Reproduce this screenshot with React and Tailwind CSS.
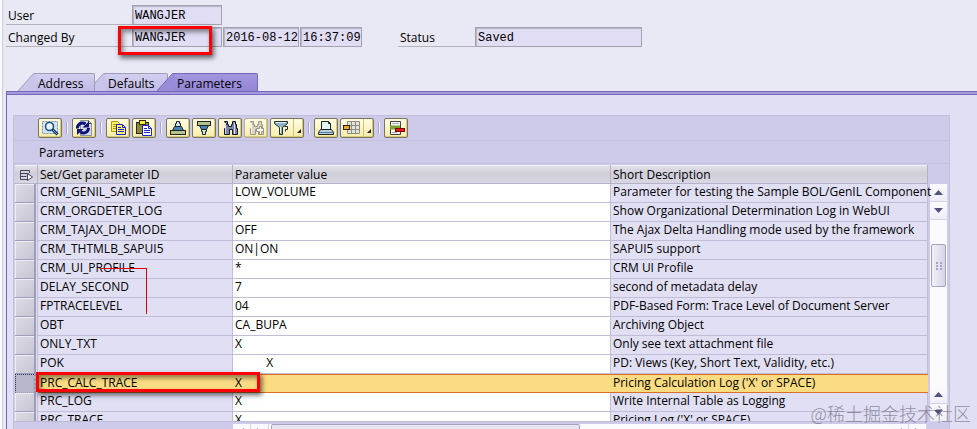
import React from 'react';
import clsx from 'clsx';

const ROWS = [
    { id: 'CRM_GENIL_SAMPLE', value: 'LOW_VOLUME', text: 'Parameter for testing the Sample BOL/GenIL Component' },
    { id: 'CRM_ORGDETER_LOG', value: 'X', text: 'Show Organizational Determination Log in WebUI' },
    { id: 'CRM_TAJAX_DH_MODE', value: 'OFF', text: 'The Ajax Delta Handling mode used by the framework' },
    { id: 'CRM_THTMLB_SAPUI5', value: 'ON|ON', text: 'SAPUI5 support' },
    { id: 'CRM_UI_PROFILE', value: '*', text: 'CRM UI Profile', marked: true },
    { id: 'DELAY_SECOND', value: '7', text: 'second of metadata delay' },
    { id: 'FPTRACELEVEL', value: '04', text: 'PDF-Based Form: Trace Level of Document Server' },
    { id: 'OBT', value: 'CA_BUPA', text: 'Archiving Object' },
    { id: 'ONLY_TXT', value: 'X', text: 'Only see text attachment file' },
    { id: 'POK', value: '          X', text: 'PD: Views (Key, Short Text, Validity, etc.)' },
    { id: 'PRC_CALC_TRACE', value: 'X', text: "Pricing Calculation Log ('X' or SPACE)", selected: true },
    { id: 'PRC_LOG', value: 'X', text: 'Write Internal Table as Logging' },
    { id: 'PRC_TRACE', value: 'X', text: "Pricing Log ('X' or SPACE)" }
];

const TABS = [
    { name: 'Address', className: 'z-10 w-[77px]' },
    { name: 'Defaults', className: '-ml-[7px] w-[80px]' },
    { name: 'Parameters', className: 'z-20 -ml-[11px] w-[101px]', active: true }
];

const Icon = ({ children, className }) => (
    <svg width="18" height="16" viewBox="0 0 18 16" fill="none" className={className}>{children}</svg>
);

const DetailIcon = () => (
    <Icon>
        <rect x="1.5" y="1.5" width="15" height="12" fill="#cfe6f2" stroke="#7d93a6" strokeDasharray="2 1" />
        <path d="M3 4h4M3 6h3M3 8h3" stroke="#fff" />
        <circle cx="8.5" cy="6.5" r="4" fill="#e8f7ff" stroke="#1f4f86" strokeWidth="1.6" />
        <path d="M6.500 5.500q1-2 3-1.500" stroke="#fff" />
        <path d="M11.500 9.500l5 5" stroke="#173a6b" strokeWidth="3" />
        <path d="M12 10l4 4" stroke="#5ea0d8" />
    </Icon>
);

const RefreshIcon = () => (
    <Icon>
        <path d="M5.500 .5h8l3 3v12h-11z" fill="#d3dde6" stroke="#8a929a" />
        <path d="M13.500 .5v3h3" stroke="#444" />
        <path d="M2.500 8.500a5 5 0 0 1 8-4.500" stroke="#11117a" strokeWidth="3" />
        <path d="M7.500 7.500H14V1.500z" fill="#11117a" />
        <path d="M13.500 8a5 5 0 0 1-8 4" stroke="#11117a" strokeWidth="3" />
        <path d="M8.500 9H2v6z" fill="#11117a" />
    </Icon>
);

const CopyIcon = () => (
    <Icon>
        <path d="M2.500 1.500h6l2 2v8h-8z" fill="#fff36a" stroke="#b09a00" />
        <path d="M4 4.500h4M4 6.500h3M4 8.500h3" stroke="#b09a00" />
        <path d="M7.500 4.500h6l3 3v7h-9z" fill="#fff36a" stroke="#1c22d0" />
        <path d="M13.500 4.500v3h3M9 7.500h3M9 9.500h6M9 11.500h6" stroke="#1c22d0" />
    </Icon>
);

const PasteIcon = () => (
    <Icon>
        <rect x="1.500" y="2.500" width="12" height="11" fill="#8c8a35" stroke="#2c2c14" />
        <rect x="4.500" y=".5" width="6" height="4" fill="#ffe92c" stroke="#2c2c14" />
        <path d="M7.500 5.500h6l3 3v7h-9z" fill="#fff" stroke="#1c22d0" />
        <path d="M13.500 5.500v3h3M9 8.500h3M9 10.500h6M9 12.500h6" stroke="#1c22d0" />
    </Icon>
);

const SortUpIcon = () => (
    <Icon>
        <rect x="1.500" y="10.500" width="15" height="4" fill="#b5c48b" stroke="#222" />
        <path d="M5.500 6.500h7l2 4h-11z" fill="#3f86b4" stroke="#222" />
        <path d="M7.500 1.500h3v2h1v3h-5v-3h1z" fill="#c9e8ef" stroke="#222" />
    </Icon>
);

const SortDownIcon = () => (
    <Icon>
        <rect x="2.500" y="1.500" width="13" height="4" fill="#b5c48b" stroke="#222" />
        <path d="M4.500 5.500h9l-2 4h-5z" fill="#3f86b4" stroke="#222" />
        <path d="M6.500 9.500h5v2h-1v3h-3v-3h-1z" fill="#c9e8ef" stroke="#222" />
    </Icon>
);

const BINOCULARS = 'M3.500 1.500h3v3h1v2h3v-2h1v-3h3v3h1v4h1v6h-5v-5h-3v5h-5v-6h1v-4h1z';

const FindIcon = () => (
    <Icon>
        <path d={BINOCULARS} fill="#7d84ad" stroke="#15151f" />
        <path d="M4.500 3v11M13.500 3v11" stroke="#d5daf0" />
    </Icon>
);

const FindNextIcon = () => (
    <Icon>
        <path d={BINOCULARS} fill="#dad6c0" stroke="#99958a" />
        <path d="M4.500 3v11" stroke="#f4f1e2" />
        <path d="M12.500 6.500h2v2h2v3h-2v3h-2v-3h-3v-3h3z" fill="#fffdf0" stroke="#99958a" />
    </Icon>
);

const FilterIcon = () => (
    <Icon>
        <path d="M1.500 1.500h13v2l-5 4v7h-3v-7l-5-4z" fill="#8fb3c6" stroke="#222b33" />
        <path d="M3 2.500h10" stroke="#dff0f7" />
        <path d="M7.500 7v6" stroke="#dff0f7" />
        <path d="M11.500 6.500h3v3h-2v2" stroke="#222b33" />
    </Icon>
);

const PrintIcon = () => (
    <Icon>
        <path d="M4.500 1.500h7l2 2v6h-9z" fill="#e0f3f7" stroke="#222" />
        <path d="M11.500 1.500v2h2" stroke="#222" />
        <path d="M3.500 9.500h11l2 3v2h-15v-2z" fill="#b7cfe0" stroke="#222" />
        <path d="M2 12.500h14" stroke="#517ba0" />
    </Icon>
);

const LayoutIcon = () => (
    <Icon>
        <path d="M4.500 1.500h12v12h-12z" fill="#e5e3d6" stroke="#8c8c88" />
        <path d="M4 5.500h13M4 9.500h13M8.500 1v13M12.500 1v13" stroke="#8c8c88" />
        <rect x=".5" y="5.500" width="6" height="4" fill="#f7a21b" stroke="#222" />
    </Icon>
);

const DeleteRowIcon = () => (
    <Icon>
        <path d="M3.500 1.500h10v13h-10z" fill="#f4f6f7" stroke="#444" />
        <path d="M5 3.500h7M5 12.500h5" stroke="#a7b0b6" />
        <path d="M3 7.500h10" stroke="#79a32c" strokeWidth="4" />
        <rect x="8.500" y="8.500" width="9" height="3" fill="#f01818" stroke="#7c0000" />
    </Icon>
);

const ToolButton = ({ label, children, split, disabled }) => (
    <div className={clsx('flex h-5 rounded-xs border bg-linear-to-b from-[#fffbe0] to-[#f9eda8] shadow-[inset_-1px_-1px_0_#d8c97a]', disabled ? 'border-[#b5b090]' : 'border-[#77765f]')}>
        <button type="button" aria-label={label} disabled={disabled} className="flex w-[22px] items-center justify-center">
            {children}
        </button>
        {split && (
            <button type="button" aria-label={`${label} menu`} className="flex w-[10px] items-end justify-center border-l border-[#c9c388] pb-1">
                <svg width="4" height="4" viewBox="0 0 4 4"><path d="M4 0v4H0z" fill="#222" /></svg>
            </button>
        )}
    </div>
);

const Separator = () => <div className="mx-0.5 h-3 w-0.5 border-l border-[#a9a6c4] bg-[#f3f2fb]" />;

const ScrollButton = ({ dir }) => (
    <button type="button" aria-label={`Scroll ${dir}`} className="flex size-[18px] shrink-0 items-center justify-center border-r border-b border-[#d5d3e6] bg-linear-to-b from-[#fbfbfe] to-[#efeef7]">
        <svg
            width="9"
            height="5"
            viewBox="0 0 9 5"
            className={clsx(dir === 'down' && 'rotate-180', dir === 'left' && '-rotate-90', dir === 'right' && 'rotate-90')}
        >
            <path d="M0 5L4.500 0L9 5z" fill="#53527a" />
        </svg>
    </button>
);

const Field = ({ id, label, value, className }) => (
    <input
        id={id}
        aria-label={label}
        defaultValue={value}
        readOnly
        className={clsx("h-5 border border-[#a3a2ae] bg-[#e0ddf5] pt-0.5 pl-0.5 font-['Liberation_Mono',monospace] text-xs shadow-[inset_1px_1px_1px_#b4b2c6] outline-none", className)}
    />
);

const FieldLabel = ({ htmlFor, children, className }) => (
    <label htmlFor={htmlFor} className={clsx('h-5 border-b border-[#b4b3bb] pl-0.5 leading-[22px]', className)}>{children}</label>
);

const Callout = ({ className }) => (
    <div className={clsx('pointer-events-none absolute z-10 border-3 border-[#fb0007] shadow-[2px_3px_5px_rgba(0,0,0,0.6),inset_2px_3px_5px_rgba(0,0,0,0.45)]', className)} />
);

const Tab = ({ name, active, className }) => (
    <button type="button" role="tab" aria-selected={!!active} className={clsx('relative flex h-[18px]', className)}>
        <svg width="18" height="18" viewBox="0 0 18 18" className="shrink-0">
            <path d="M0 18L16 .5H18V18z" fill={active ? '#9a8cd9' : '#c9c4ea'} />
            <path d="M0 18L15.500 .5H18" fill="none" stroke={active ? '#7667b9' : '#9f9bb8'} />
        </svg>
        <span
            className={clsx(
                'h-full grow rounded-tr-xs border-t border-r pl-0.5 text-left leading-5',
                active ? 'border-[#7667b9] bg-linear-to-b from-[#a296df] to-[#9485d6]' : 'border-[#9f9bb8] bg-linear-to-b from-[#d3cff0] to-[#c0bae5]'
            )}
        >
            {name}
        </span>
    </button>
);

const HeaderCell = ({ children }) => (
    <th scope="col" className="h-[19px] border-r border-b border-[#b5b2cc] bg-linear-to-b from-[#e2e1e9] via-[#d0cfd9] to-[#d8d7e1] p-0 px-0.5 pt-0.5 text-left leading-4 font-normal shadow-[inset_0_1px_0_#f1f0f6]">
        {children}
    </th>
);

const ParameterRow = ({ row }) => {
    const cell = clsx(
        'h-[19px] border-b p-0 align-top leading-4 whitespace-nowrap',
        row.selected ? 'border-t border-[#d9702a] bg-[#fcdc83]' : 'border-r border-[#c1bdd9]'
    );
    return (
        <tr>
            <td className="h-[19px] border-r border-[#c1bdd9] p-0">
                <button
                    type="button"
                    aria-label={`Select ${row.id}`}
                    className={clsx(
                        'block h-[19px] w-[21px] border-r-2 border-b border-[#a09dba]',
                        row.selected
                            ? 'border-t border-l border-t-[#2d2a66] border-l-[#2d2a66] border-dotted bg-[#b8b6c9]'
                            : 'bg-linear-to-br from-[#dddce6] to-[#c6c5d2] shadow-[inset_1px_1px_0_#efeef5]'
                    )}
                />
            </td>
            <td className={clsx(cell, 'relative px-0.5')}>
                {row.id}
                {row.marked && <div className="pointer-events-none absolute top-2 left-[62px] z-10 h-[46px] w-[47px] border-t border-r border-[#e00000]" />}
                {row.selected && <Callout className="-top-[3px] -left-0.5 h-5 w-[224px]" />}
            </td>
            <td className={clsx(cell, !row.selected && 'bg-white')}>
                <input aria-label={`${row.id} value`} defaultValue={row.value} className="block h-4 w-full bg-transparent px-0.5 outline-none" />
            </td>
            <td className={clsx(cell, 'pl-0.5')}>{row.text}</td>
        </tr>
    );
};

const App = () => {
    return (
        <div className="relative h-screen overflow-hidden border-l-2 border-[#fafafc] bg-[#e9e8f5] font-['Open_Sans',sans-serif] text-xs text-black">
            <div className="min-h-full border-l border-[#cfcce6] pl-[3px]">
                {/* User header */}
                <form className="flex flex-col gap-0.5 pt-[5px]">
                    <div className="flex">
                        <FieldLabel htmlFor="user" className="w-[126px]">User</FieldLabel>
                        <Field id="user" value="WANGJER" className="w-[90px]" />
                    </div>
                    <div className="flex gap-px">
                        <div className="relative flex">
                            <FieldLabel htmlFor="changed-by" className="w-[126px]">Changed By</FieldLabel>
                            <Field id="changed-by" value="WANGJER" className="w-[90px]" />
                            <Callout className="-top-px left-[112px] h-[29px] w-[94px]" />
                        </div>
                        <Field label="Change date" value="2016-08-12" className="w-[76px]" />
                        <Field label="Change time" value="16:37:09" className="w-[62px]" />
                        <div className="ml-[35px] flex">
                            <FieldLabel htmlFor="status" className="w-[77px]">Status</FieldLabel>
                            <Field id="status" value="Saved" className="w-[167px]" />
                        </div>
                    </div>
                </form>

                {/* Tabs */}
                <div role="tablist" className="mt-[26px] flex pl-3">
                    {TABS.map((tab) => (
                        <Tab key={tab.name} {...tab} />
                    ))}
                </div>

                {/* Tab panel */}
                <div role="tabpanel" className="border-t border-l border-[#7667b9] bg-[#e1dff4]">
                    <div className="h-[3px] border-b border-[#7667b9] bg-[#a599df]" />
                    <div className="pt-5 pr-[27px] pl-1.5">
                        <div className="border border-[#c3c0da] bg-[#cdcaea]">
                            <div role="toolbar" className="flex h-[25px] items-center gap-0.5 border-b border-[#c3c0da] pl-6">
                                <ToolButton label="Details"><DetailIcon /></ToolButton>
                                <Separator />
                                <ToolButton label="Refresh"><RefreshIcon /></ToolButton>
                                <Separator />
                                <ToolButton label="Copy"><CopyIcon /></ToolButton>
                                <ToolButton label="Paste"><PasteIcon /></ToolButton>
                                <Separator />
                                <ToolButton label="Sort ascending"><SortUpIcon /></ToolButton>
                                <ToolButton label="Sort descending"><SortDownIcon /></ToolButton>
                                <ToolButton label="Find"><FindIcon /></ToolButton>
                                <ToolButton label="Find next" disabled><FindNextIcon /></ToolButton>
                                <ToolButton label="Filter" split><FilterIcon /></ToolButton>
                                <Separator />
                                <ToolButton label="Print"><PrintIcon /></ToolButton>
                                <ToolButton label="Layout" split><LayoutIcon /></ToolButton>
                                <Separator />
                                <ToolButton label="Delete row"><DeleteRowIcon /></ToolButton>
                            </div>
                            <h2 className="h-[23px] border-b border-[#c3c0da] pl-[25px] leading-6">Parameters</h2>

                            <div className="flex gap-0.5 pt-px pr-0.5 pl-px">
                                <div className="z-10 h-[257px] min-w-0 grow overflow-y-clip border-b border-[#bdb9d8] bg-[#e1dff4]">
                                    <table className="w-full table-fixed border-separate border-spacing-0">
                                        <colgroup>
                                            <col className="w-[23px]" />
                                            <col className="w-[195px]" />
                                            <col className="w-[378px]" />
                                            <col />
                                        </colgroup>
                                        <thead>
                                            <tr>
                                                <HeaderCell>
                                                    <button type="button" aria-label="Select all" className="flex h-4 w-full items-center justify-center">
                                                        <svg width="13" height="11" viewBox="0 0 13 11" fill="none">
                                                            <path d="M8 9.500H.5v-9h9V3M.5 3.500h8M.5 6.500h6" stroke="#45435c" />
                                                            <path d="M7.500 3.500v7l5-3.500z" fill="#fff" stroke="#45435c" />
                                                        </svg>
                                                    </button>
                                                </HeaderCell>
                                                <HeaderCell>Set/Get parameter ID</HeaderCell>
                                                <HeaderCell>Parameter value</HeaderCell>
                                                <HeaderCell>Short Description</HeaderCell>
                                            </tr>
                                        </thead>
                                        <tbody>
                                            {ROWS.map((row) => (
                                                <ParameterRow key={row.id} row={row} />
                                            ))}
                                        </tbody>
                                    </table>
                                </div>
                                <div className="mt-[19px] flex w-[17px] flex-col bg-[#fafafd]">
                                    <ScrollButton dir="up" />
                                    <ScrollButton dir="down" />
                                    <div className="grow pt-6">
                                        <div className="mx-px flex h-[43px] items-center justify-center rounded-xs border border-[#a5a3c0] bg-linear-to-r from-[#f2f1fa] to-[#d5d3e8]">
                                            <div className="h-2 w-1.5 border-x-2 border-dotted border-[#a5a3c0]" />
                                        </div>
                                    </div>
                                    <ScrollButton dir="up" />
                                    <ScrollButton dir="down" />
                                </div>
                            </div>

                            <div className="mt-0.5 mr-[22px] ml-[219px] flex h-[18px] bg-[#fafafd]">
                                <ScrollButton dir="left" />
                                <ScrollButton dir="right" />
                                <div className="grow px-0.5">
                                    <div className="h-full w-1/2 rounded-xs border border-[#a5a3c0] bg-[#e6e4f2]" />
                                </div>
                                <ScrollButton dir="left" />
                                <ScrollButton dir="right" />
                            </div>
                        </div>
                    </div>
                </div>
            </div>

            <div className="absolute right-1.5 bottom-1 z-20 font-['Noto_Sans_CJK_SC',sans-serif] text-[18px] leading-6 font-light text-[#77758a]/80">
                @稀土掘金技术社区
            </div>
        </div>
    );
};

export default App;
